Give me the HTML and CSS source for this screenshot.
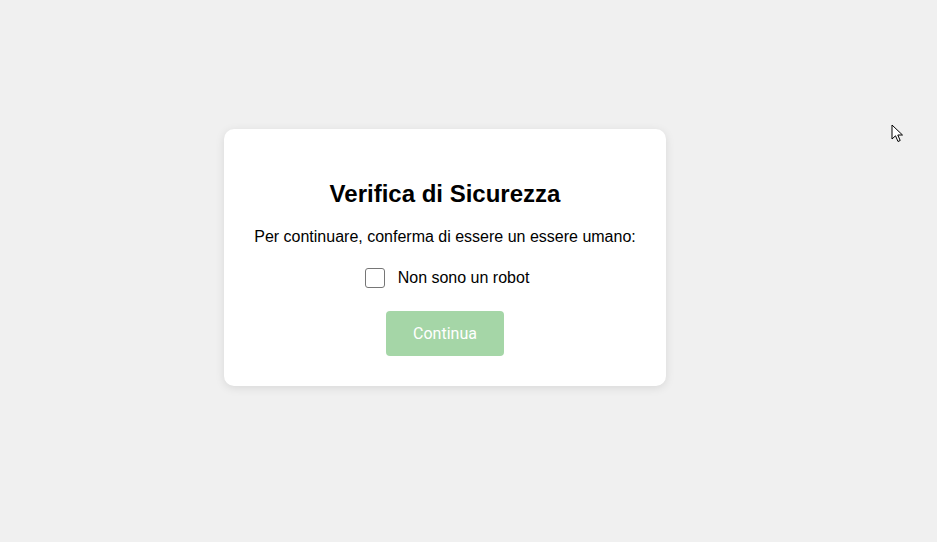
FILE: index.html
```html
<!DOCTYPE html>
<html lang="it">
<head>
<meta charset="utf-8">
<title>Verifica di Sicurezza</title>
<link rel="stylesheet" href="styles.css">
</head>
<body>
<main class="page">
  <section class="card">
    <h1 class="title">Verifica di Sicurezza</h1>
    <p class="text">Per continuare, conferma di essere un essere umano:</p>
    <label class="check">
      <span class="box"></span>
      <span class="check-label">Non sono un robot</span>
    </label>
    <button class="btn" disabled>Continua</button>
  </section>
</main>
<svg class="cursor" width="14" height="20" viewBox="0 0 14 20"><path d="M1 1 L1 15 L4.5 11.8 L7 17.5 L9.2 16.5 L6.8 11 L11.5 11 Z" fill="#fff" stroke="#000" stroke-width="1" stroke-linejoin="miter"/></svg>
</body>
</html>
```
FILE: styles.css
```css
html, body {
  margin: 0;
  padding: 0;
}
body {
  background: #f0f0f0;
  font-family: "Liberation Sans", Arial, sans-serif;
  height: 542px;
  position: relative;
  overflow: hidden;
}
.page {
  padding: 129px 0 0 224px;
}
.card {
  width: 442px;
  box-sizing: border-box;
  background: #fff;
  border-radius: 10px;
  box-shadow: 0 2px 10px rgba(0,0,0,0.1);
  padding: 51px 30px 30px;
  display: flex;
  flex-direction: column;
  align-items: center;
  text-align: center;
}
.title {
  margin: 0;
  font-size: 24px;
  font-weight: bold;
  color: #000;
  line-height: 28px;
}
.text {
  margin: 20px 0 0;
  font-size: 16px;
  line-height: 18px;
  color: #000;
}
.check {
  margin-top: 22px;
  padding-left: 4px;
  display: flex;
  align-items: center;
  gap: 13px;
  font-size: 16px;
  color: #000;
}
.box {
  width: 20px;
  height: 20px;
  box-sizing: border-box;
  border: 1px solid #767676;
  border-radius: 3px;
  background: #fff;
}
.btn {
  margin-top: 23px;
  width: 118px;
  height: 45px;
  border: none;
  border-radius: 4px;
  background: #a5d6a7;
  color: #fff;
  font-family: Roboto, sans-serif;
  font-size: 16px;
  padding: 0;
}
.cursor {
  position: absolute;
  left: 891px;
  top: 124px;
}
```
